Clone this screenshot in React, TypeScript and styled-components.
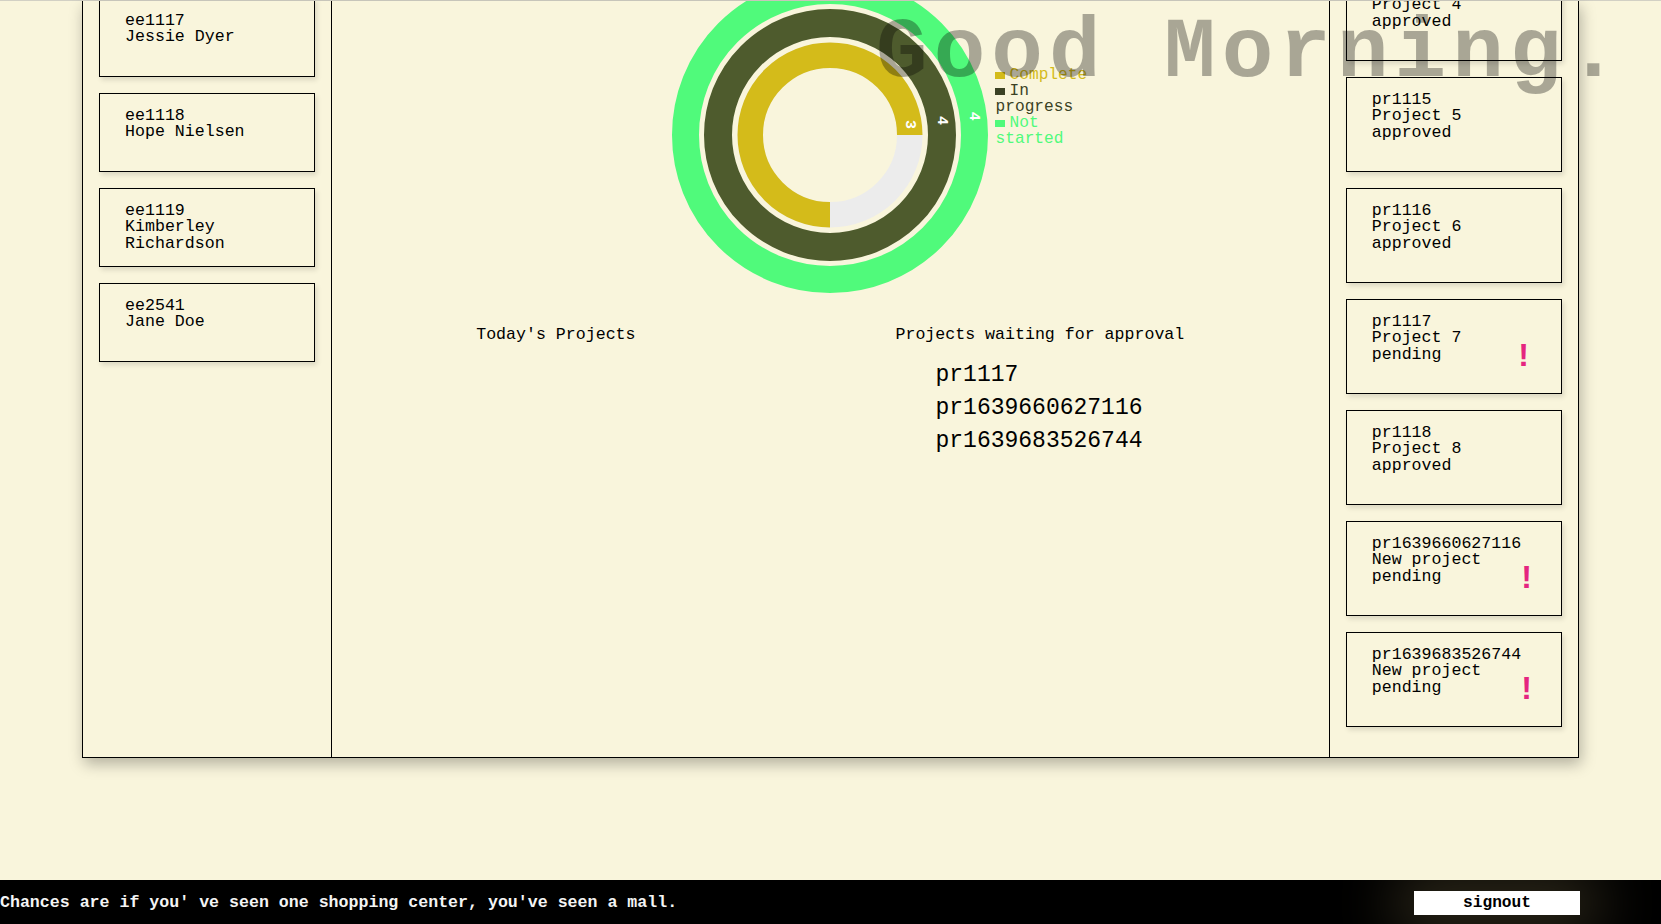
import React from "react";
import styled, { createGlobalStyle } from "styled-components";

const mono = `"Courier New", "Liberation Mono", monospace`;

const GlobalStyle = createGlobalStyle`
  html, body {
    margin: 0;
    padding: 0;
    background-color: #f9f5dc;
    font-family: ${mono};
    font-size: 16.6px;
    color: #000;
  }
  * {
    box-sizing: border-box;
  }
`;

const Page = styled.div`
  min-height: 100vh;
  display: flex;
  flex-direction: column;
  border-top: 1px solid #d2d0c4;
`;

const Greeting = styled.h1`
  position: fixed;
  top: 10px;
  right: 36px;
  margin: 0;
  font-family: ${mono};
  font-size: 86px;
  letter-spacing: 6px;
  line-height: 86px;
  font-weight: bold;
  color: rgba(0, 0, 0, 0.32);
  white-space: pre;
  pointer-events: none;
  z-index: 10;
`;

const Panel = styled.main`
  box-sizing: content-box;
  width: 90%;
  height: 756px;
  margin: 0 auto;
  border: 1px solid #000;
  border-top: none;
  box-shadow: 2px 6px 14px rgba(0, 0, 0, 0.28);
  display: grid;
  grid-template-columns: 1fr 4fr 1fr;
  overflow: hidden;
`;

const SideColumn = styled.aside<{ side: "left" | "right" }>`
  display: flex;
  flex-direction: column;
  gap: 16px;
  overflow: hidden;
  ${(p) =>
    p.side === "left"
      ? `
      border-right: 1px solid #000;
      justify-content: flex-start;
    `
      : `
      border-left: 1px solid #000;
      justify-content: flex-end;
      padding-bottom: 30px;
    `}
  > :first-child {
    ${(p) => (p.side === "left" ? "margin-top: -3px;" : "")}
  }
`;

const Card = styled.div<{ tall?: boolean }>`
  flex-shrink: 0;
  height: ${(p) => (p.tall ? "95px" : "79px")};
  margin: 0 16px;
  padding: 14px 32px 0 25px;
  border: 1px solid #000;
  box-shadow: 2px 3px 5px rgba(0, 0, 0, 0.12);
  display: flex;
  justify-content: space-between;
  align-items: flex-start;
  line-height: 16.3px;
`;

const CardText = styled.div`
  white-space: pre-line;
`;

const Alert = styled.span`
  margin-top: 25px;
  font-family: "Liberation Sans", Arial, sans-serif;
  font-weight: bold;
  font-size: 32px;
  line-height: 32px;
  color: #e5257f;
`;

const Center = styled.section`
  overflow: hidden;
`;

const ChartRow = styled.div`
  display: grid;
  grid-template-columns: 1fr 316px 1fr;
  margin-top: -24px;
`;

const Legend = styled.ul`
  list-style: none;
  margin: 0;
  padding: 90px 0 0 7px;
  width: 107px;
  font-size: 16.2px;
  line-height: 16px;
`;

const LegendItem = styled.li<{ color: string }>`
  color: ${(p) => p.color};
  &::before {
    content: "";
    display: inline-block;
    width: 10px;
    height: 7px;
    margin-right: 4px;
    background-color: ${(p) => p.color};
  }
`;

const Sections = styled.div`
  display: grid;
  grid-template-columns: 1fr 1fr;
  margin-top: 34px;
`;

const Section = styled.div<{ indent: number }>`
  padding-left: ${(p) => p.indent}px;
`;

const Heading = styled.h2`
  margin: 0;
  font-size: 16.6px;
  font-weight: normal;
  line-height: 16.3px;
`;

const ApprovalList = styled.ul`
  list-style: none;
  margin: 16px 0 0;
  padding-left: 40px;
  font-size: 23px;
  line-height: 32.8px;
`;

const Footer = styled.footer`
  margin-top: auto;
  height: 44px;
  background-color: #000;
  display: flex;
  align-items: center;
  justify-content: space-between;
  padding-right: 81px;
  overflow: hidden;
`;

const Quote = styled.p`
  margin: 0;
  color: #f4f4f4;
  font-weight: bold;
  white-space: pre;
`;

const SignoutButton = styled.button`
  width: 166px;
  height: 24px;
  margin-top: 2px;
  border: none;
  background-color: #fff;
  font-family: ${mono};
  font-size: 16.2px;
  font-weight: bold;
  color: #000;
  box-shadow: 0 0 60px 18px rgba(95, 85, 55, 0.5);
  cursor: pointer;
`;

const colors = {
  complete: "#d4bb1a",
  progress: "#4e5b2d",
  progressText: "#3b4224",
  notStarted: "#50fa7b",
  rest: "#ececec",
};

const employees = [
  { id: "ee1117", name: "Jessie Dyer" },
  { id: "ee1118", name: "Hope Nielsen" },
  { id: "ee1119", name: "Kimberley\nRichardson" },
  { id: "ee2541", name: "Jane Doe" },
];

const projects = [
  { id: "pr1114", name: "Project 4", status: "approved" },
  { id: "pr1115", name: "Project 5", status: "approved" },
  { id: "pr1116", name: "Project 6", status: "approved" },
  { id: "pr1117", name: "Project 7", status: "pending" },
  { id: "pr1118", name: "Project 8", status: "approved" },
  { id: "pr1639660627116", name: "New project", status: "pending" },
  { id: "pr1639683526744", name: "New project", status: "pending" },
];

const C = 158;
const LABEL_ANGLE = (-7.5 * Math.PI) / 180;

const RingLabel: React.FC<{ r: number; value: number }> = ({ r, value }) => {
  const x = C + r * Math.cos(LABEL_ANGLE);
  const y = C + r * Math.sin(LABEL_ANGLE);
  return (
    <text
      transform={`translate(${x} ${y}) rotate(90)`}
      textAnchor="middle"
      dominantBaseline="central"
      fill="#fff"
      fontFamily={mono}
      fontWeight="bold"
      fontSize="15"
    >
      {value}
    </text>
  );
};

const StatusChart: React.FC = () => {
  const inner = 79.75;
  return (
    <svg width="316" height="316" viewBox="0 0 316 316">
      <circle cx={C} cy={C} r={144.5} fill="none" stroke={colors.notStarted} strokeWidth={27} />
      <circle cx={C} cy={C} r={112} fill="none" stroke={colors.progress} strokeWidth={28} />
      <circle cx={C} cy={C} r={inner} fill="none" stroke={colors.rest} strokeWidth={25.5} />
      <path
        d={`M ${C} ${C + inner} A ${inner} ${inner} 0 1 1 ${C + inner} ${C}`}
        fill="none"
        stroke={colors.complete}
        strokeWidth={25.5}
      />
      <RingLabel r={inner} value={3} />
      <RingLabel r={112} value={4} />
      <RingLabel r={144.5} value={4} />
    </svg>
  );
};

export default function App() {
  return (
    <>
      <GlobalStyle />
      <Page>
        <Greeting>Good Morning.</Greeting>
        <Panel>
          <SideColumn side="left">
            {employees.map((e) => (
              <Card key={e.id}>
                <CardText>
                  {e.id}
                  {"\n"}
                  {e.name}
                </CardText>
              </Card>
            ))}
          </SideColumn>

          <Center>
            <ChartRow>
              <div />
              <StatusChart />
              <Legend>
                <LegendItem color={colors.complete}>Complete</LegendItem>
                <LegendItem color={colors.progressText}>In progress</LegendItem>
                <LegendItem color={colors.notStarted}>Not started</LegendItem>
              </Legend>
            </ChartRow>
            <Sections>
              <Section indent={144}>
                <Heading>Today's Projects</Heading>
              </Section>
              <Section indent={65}>
                <Heading>Projects waiting for approval</Heading>
                <ApprovalList>
                  {projects
                    .filter((p) => p.status === "pending")
                    .map((p) => (
                      <li key={p.id}>{p.id}</li>
                    ))}
                </ApprovalList>
              </Section>
            </Sections>
          </Center>

          <SideColumn side="right">
            {projects.map((p) => (
              <Card tall key={p.id}>
                <CardText>
                  {p.id}
                  {"\n"}
                  {p.name}
                  {"\n"}
                  {p.status}
                </CardText>
                {p.status === "pending" && <Alert>!</Alert>}
              </Card>
            ))}
          </SideColumn>
        </Panel>
        <Footer>
          <Quote>Chances are if you' ve seen one shopping center, you've seen a mall.</Quote>
          <SignoutButton>signout</SignoutButton>
        </Footer>
      </Page>
    </>
  );
}
